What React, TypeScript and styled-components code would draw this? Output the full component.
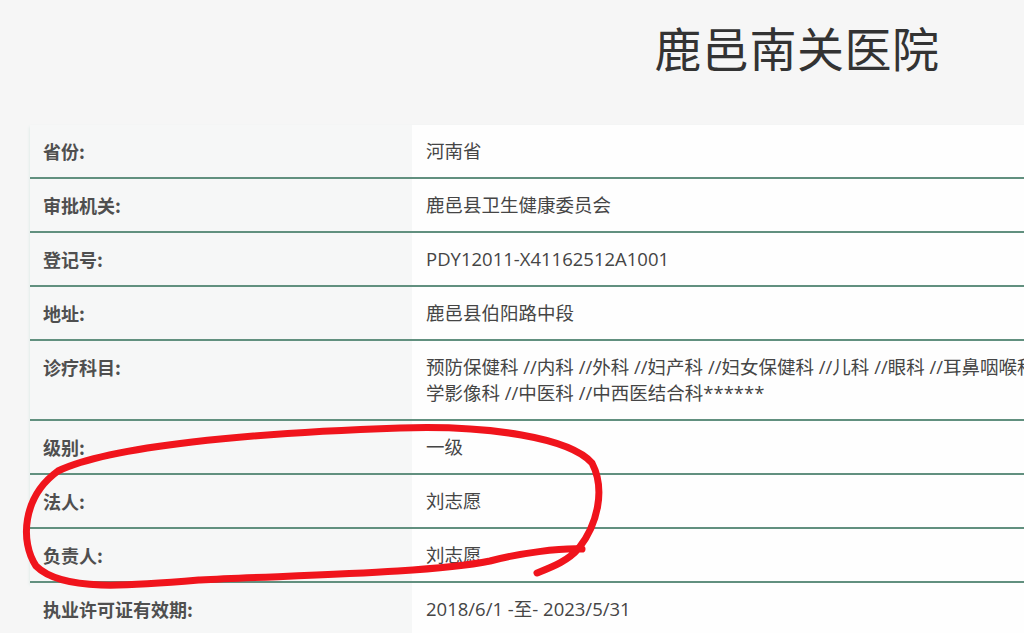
import React from "react";
import styled, { createGlobalStyle } from "styled-components";

const Global = createGlobalStyle`
  html, body {
    margin: 0;
    padding: 0;
    background: #f6f6f6;
    overflow: hidden;
  }
  body {
    font-family: "Noto Sans CJK SC", "Noto Sans", sans-serif;
    color: #444;
  }
`;

const Page = styled.div`
  position: relative;
  width: 1594px;
  height: 633px;
  overflow: hidden;
  background: #f6f6f6;
`;

const Header = styled.header`
  height: 125px;
  box-sizing: border-box;
  padding-top: 18px;
  text-align: center;
`;

const Title = styled.h1`
  margin: 0;
  font-size: 47px;
  line-height: 58px;
  font-weight: 400;
  color: #333;
  letter-spacing: 0.5px;
`;

const Table = styled.div`
  margin-left: 30px;
  display: flex;
  flex-direction: column;
`;

const Row = styled.div<{ $last?: boolean }>`
  display: grid;
  grid-template-columns: 382px 1fr;
  border-bottom: ${(p) => (p.$last ? "none" : "2px solid #62907f")};
  box-shadow: ${(p) => (p.$last ? "none" : "0 2px 3px rgba(130, 195, 175, 0.28)")};
`;

const Label = styled.div`
  padding: 13px;
  font-size: 18px;
  line-height: 26px;
  font-weight: 700;
  color: #4f4f4f;
  background: #f6f7f7;
`;

const Value = styled.div`
  padding: 13px 14px;
  font-family: "Open Sans", "Noto Sans CJK SC", sans-serif;
  font-size: 18.5px;
  line-height: 26px;
  color: #454545;
  background: #fefefe;
  white-space: nowrap;
`;

const Scribble = styled.svg`
  position: absolute;
  left: 0;
  top: 0;
  pointer-events: none;
`;

const rows: { label: string; value: React.ReactNode }[] = [
  { label: "省份:", value: "河南省" },
  { label: "审批机关:", value: "鹿邑县卫生健康委员会" },
  { label: "登记号:", value: "PDY12011-X41162512A1001" },
  { label: "地址:", value: "鹿邑县伯阳路中段" },
  {
    label: "诊疗科目:",
    value: (
      <>
        预防保健科 //内科 //外科 //妇产科 //妇女保健科 //儿科 //眼科 //耳鼻咽喉科 //口腔科 //医
        <br />
        学影像科 //中医科 //中西医结合科******
      </>
    ),
  },
  { label: "级别:", value: "一级" },
  { label: "法人:", value: "刘志愿" },
  { label: "负责人:", value: "刘志愿" },
  { label: "执业许可证有效期:", value: "2018/6/1 -至- 2023/5/31" },
];

export default function App() {
  return (
    <>
      <Global />
      <Page>
        <Header>
          <Title>鹿邑南关医院</Title>
        </Header>
        <Table>
          {rows.map((r, i) => (
            <Row key={r.label} $last={i === rows.length - 1}>
              <Label>{r.label}</Label>
              <Value>{r.value}</Value>
            </Row>
          ))}
        </Table>
        <Scribble width="1024" height="633" viewBox="0 0 1024 633">
          <path
            d="M 582 549 C 560 548, 520 553, 490 561 C 430 573, 300 575, 200 580 C 130 586, 62 592, 36 566 C 20 542, 22 497, 58 471 C 110 446, 250 433, 400 428 C 490 425, 570 438, 592 463 C 606 490, 597 525, 579 548 C 568 561, 552 567, 537 573"
            fill="none"
            stroke="#f0141c"
            strokeWidth="7"
            strokeLinecap="round"
            strokeLinejoin="round"
          />
        </Scribble>
      </Page>
    </>
  );
}
